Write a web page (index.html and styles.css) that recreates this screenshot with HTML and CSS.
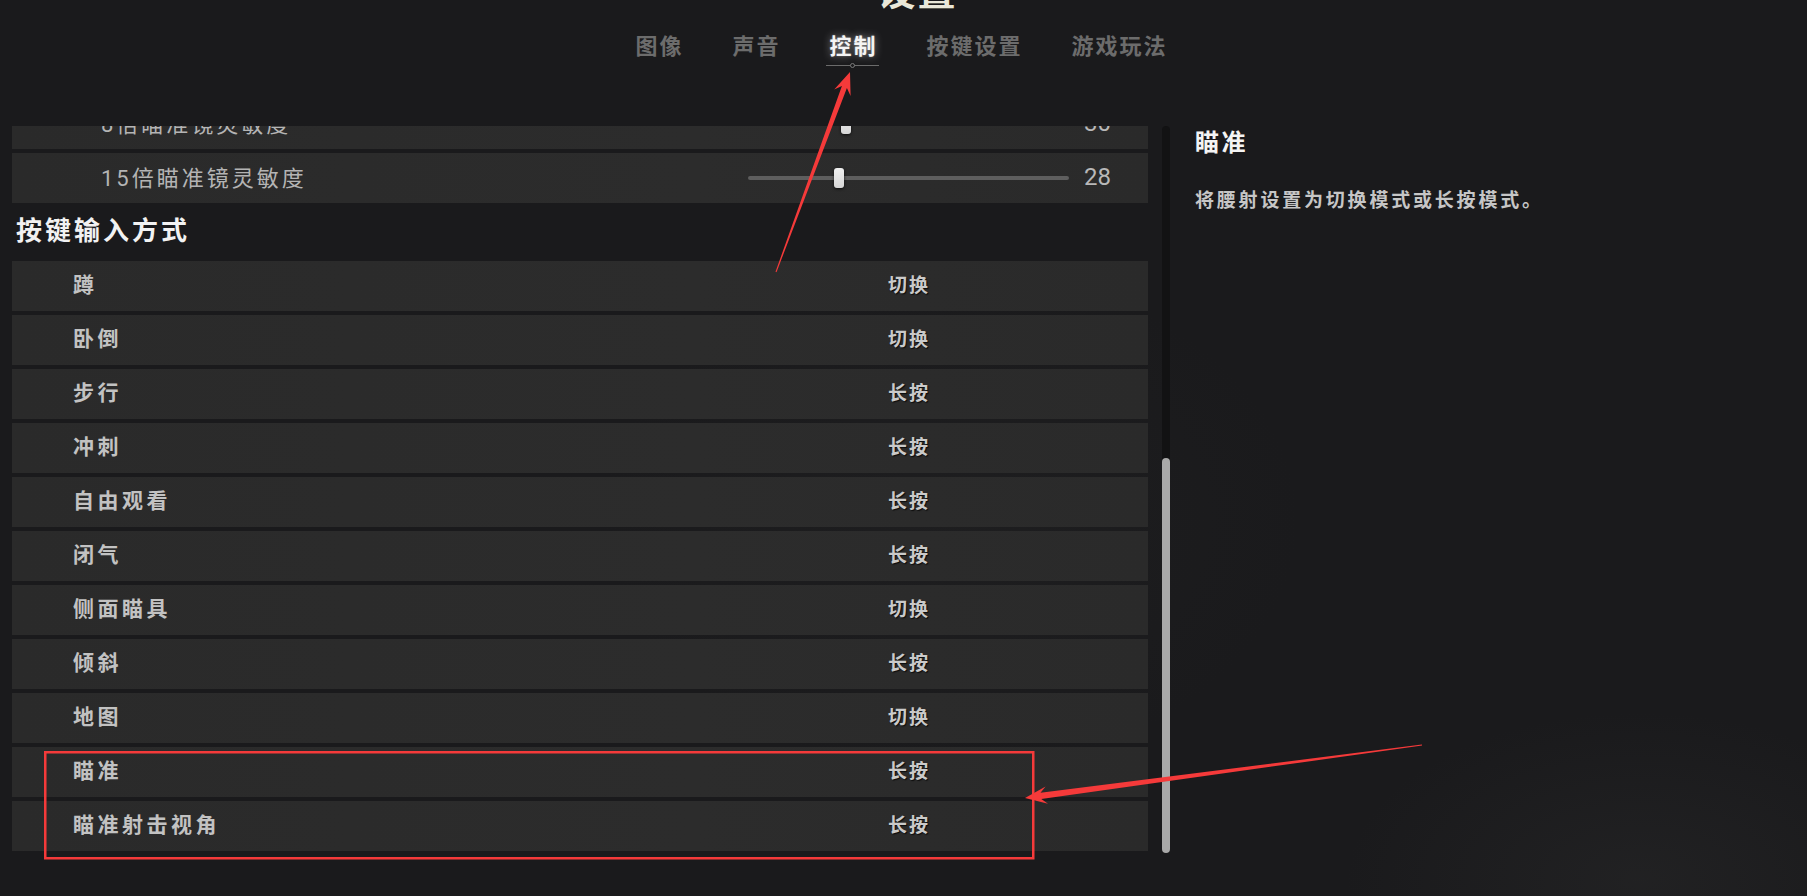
FILE: index.html
```html
<!DOCTYPE html>
<html lang="zh-CN">
<head>
<meta charset="utf-8">
<title>设置</title>
<link rel="stylesheet" href="styles.css">
</head>
<body>
<div class="page">
  <header class="header">
    <h1 class="title">设置</h1>
    <nav class="tabs">
      <div class="tab"><span class="tab-text">图像</span><span class="tab-line"></span></div>
      <div class="tab"><span class="tab-text">声音</span><span class="tab-line"></span></div>
      <div class="tab active"><span class="tab-text">控制</span><span class="tab-line"><span class="tab-dot"></span></span></div>
      <div class="tab"><span class="tab-text">按键设置</span><span class="tab-line"></span></div>
      <div class="tab"><span class="tab-text">游戏玩法</span><span class="tab-line"></span></div>
    </nav>
  </header>
  <main class="main">
    <section class="list">
      <div class="list-inner">
        <div class="row slider-row">
          <span class="slider-label">8倍瞄准镜灵敏度</span>
          <div class="track"><span class="thumb" style="left: 29%"></span></div>
          <span class="slider-value">30</span>
        </div>
        <div class="row slider-row">
          <span class="slider-label">15倍瞄准镜灵敏度</span>
          <div class="track"><span class="thumb" style="left: 26.8%"></span></div>
          <span class="slider-value">28</span>
        </div>
        <h2 class="section-title">按键输入方式</h2>
        <div class="row key-row"><span class="label">蹲</span><span class="value">切换</span></div>
        <div class="row key-row"><span class="label">卧倒</span><span class="value">切换</span></div>
        <div class="row key-row"><span class="label">步行</span><span class="value">长按</span></div>
        <div class="row key-row"><span class="label">冲刺</span><span class="value">长按</span></div>
        <div class="row key-row"><span class="label">自由观看</span><span class="value">长按</span></div>
        <div class="row key-row"><span class="label">闭气</span><span class="value">长按</span></div>
        <div class="row key-row"><span class="label">侧面瞄具</span><span class="value">切换</span></div>
        <div class="row key-row"><span class="label">倾斜</span><span class="value">长按</span></div>
        <div class="row key-row"><span class="label">地图</span><span class="value">切换</span></div>
        <div class="row key-row"><span class="label">瞄准</span><span class="value">长按</span></div>
        <div class="row key-row"><span class="label">瞄准射击视角</span><span class="value">长按</span></div>
      </div>
    </section>
    <div class="scrollbar"><span class="scroll-thumb"></span></div>
    <aside class="info">
      <h3 class="info-title">瞄准</h3>
      <p class="info-desc">将腰射设置为切换模式或长按模式。</p>
    </aside>
  </main>
  <svg class="annotations" width="1807" height="896" viewBox="0 0 1807 896">
    <rect x="45.25" y="752.25" width="988" height="106" fill="none" stroke="#f53a3a" stroke-width="2.5"/>
    <polygon fill="#f53a3a" points="776.5,272.2 846.9,88.0 850.6,96.0 850,72 834.2,89.6 841.9,86.0 775.5,271.8"/>
    <polygon fill="#f53a3a" points="1422.1,745.5 1041.3,799.0 1048.0,803.8 1025,798 1045.6,786.4 1040.5,792.8 1421.9,744.5"/>
  </svg>
</div>
</body>
</html>
```

FILE: styles.css
```css
* { box-sizing: border-box; }

html, body {
  margin: 0;
  padding: 0;
}

body {
  width: 1807px;
  height: 896px;
  overflow: hidden;
  background-color: #1a1a1c;
  background-image:
    radial-gradient(ellipse 420px 240px at 1640px 880px, rgba(55,55,55,0.25), rgba(0,0,0,0) 70%),
    radial-gradient(ellipse 500px 360px at 950px 520px, rgba(45,45,45,0.2), rgba(0,0,0,0) 70%);
  font-family: "Noto Sans CJK SC", "Noto Sans", sans-serif;
  color: #c4c4c4;
}

.page {
  position: relative;
  width: 1807px;
  height: 896px;
}

/* ---------- header ---------- */
.header {
  height: 126px;
  display: flex;
  flex-direction: column;
  align-items: center;
}

.title {
  margin: -30px 0 0 28px;
  font-size: 38px;
  line-height: 38px;
  font-weight: 700;
  letter-spacing: 2px;
  color: #e9e7d8;
}

.tabs {
  margin-top: 21px;
  margin-left: -4px;
  display: flex;
  gap: 49px;
}

.tab {
  display: flex;
  flex-direction: column;
  align-items: stretch;
}

.tab-text {
  font-size: 22px;
  line-height: 30px;
  font-weight: 700;
  letter-spacing: 2px;
  color: #6c6c6c;
}

.tab-line {
  position: relative;
  height: 1px;
  margin: 6px -1px 0 -3px;
}

.tab.active .tab-text {
  color: #f4f4f4;
  text-shadow: 0 0 8px rgba(255,255,255,0.45), 0 0 2px rgba(255,255,255,0.3);
}

.tab.active .tab-line {
  background: #6b6b6b;
}

.tab-dot {
  position: absolute;
  left: 50%;
  top: -2px;
  width: 5px;
  height: 5px;
  margin-left: -2.5px;
  border: 1px solid #7a7a7a;
  border-radius: 50%;
  background: #1a1a1c;
}

/* ---------- main ---------- */
.main {
  display: flex;
  align-items: flex-start;
  padding-left: 12px;
}

.list {
  width: 1136px;
  height: 729px;
  overflow: hidden;
}

.list-inner {
  margin-top: -27px;
}

.row {
  height: 50px;
  margin-bottom: 4px;
  background: linear-gradient(90deg, #2a2a2a 0%, #2c2c2c 60%, #2a2a2a 100%);
}

.slider-row {
  display: grid;
  grid-template-columns: 632px 321px auto;
  column-gap: 15px;
  align-items: center;
  padding-left: 89px;
}

.slider-label {
  margin-bottom: 5px;
  font-family: "Roboto", "Noto Sans CJK SC", sans-serif;
  font-size: 22px;
  font-weight: 400;
  letter-spacing: 3px;
  color: #b4b4b4;
}

.track {
  position: relative;
  height: 4px;
  border-radius: 2px;
  background: #5e5e5e;
}

.thumb {
  position: absolute;
  top: -8px;
  width: 10px;
  height: 20px;
  border-radius: 3px;
  background: linear-gradient(180deg, #f0f0f0, #d6d6d6);
  box-shadow: 0 1px 3px rgba(0,0,0,0.7);
}

.slider-value {
  margin-bottom: 3px;
  font-family: "Roboto", sans-serif;
  font-size: 24px;
  font-weight: 400;
  color: #b8b8b8;
}

.section-title {
  margin: 0;
  height: 54px;
  display: flex;
  align-items: center;
  padding: 0 0 12px 4px;
  font-size: 26px;
  font-weight: 700;
  letter-spacing: 3px;
  color: #f2f2f2;
}

.key-row {
  display: grid;
  grid-template-columns: 815px auto;
  align-items: center;
  padding-left: 61px;
}

.label {
  margin-bottom: 6px;
  font-size: 21px;
  font-weight: 700;
  letter-spacing: 3.5px;
  color: #c2c2c2;
}

.value {
  margin-bottom: 6px;
  font-size: 19px;
  font-weight: 700;
  letter-spacing: 2px;
  color: #cacaca;
  text-shadow: 1px 1px 1px #0c0c0c;
}

/* ---------- scrollbar ---------- */
.scrollbar {
  margin-left: 14px;
  width: 8px;
  height: 727px;
  background: #121213;
  border-radius: 4px;
  display: flex;
  flex-direction: column;
  justify-content: flex-end;
}

.scroll-thumb {
  height: 395px;
  border-radius: 4px;
  background: #a9a9a9;
}

/* ---------- info ---------- */
.info {
  margin-left: 25px;
}

.info-title {
  margin: 0;
  font-size: 24px;
  line-height: 30px;
  font-weight: 700;
  letter-spacing: 2.5px;
  color: #f4f4f4;
}

.info-desc {
  margin: 29px 0 0;
  font-size: 19px;
  line-height: 28px;
  font-weight: 700;
  letter-spacing: 2.8px;
  color: #c6c6c6;
}

/* ---------- annotations ---------- */
.annotations {
  position: absolute;
  left: 0;
  top: 0;
  pointer-events: none;
}
```
